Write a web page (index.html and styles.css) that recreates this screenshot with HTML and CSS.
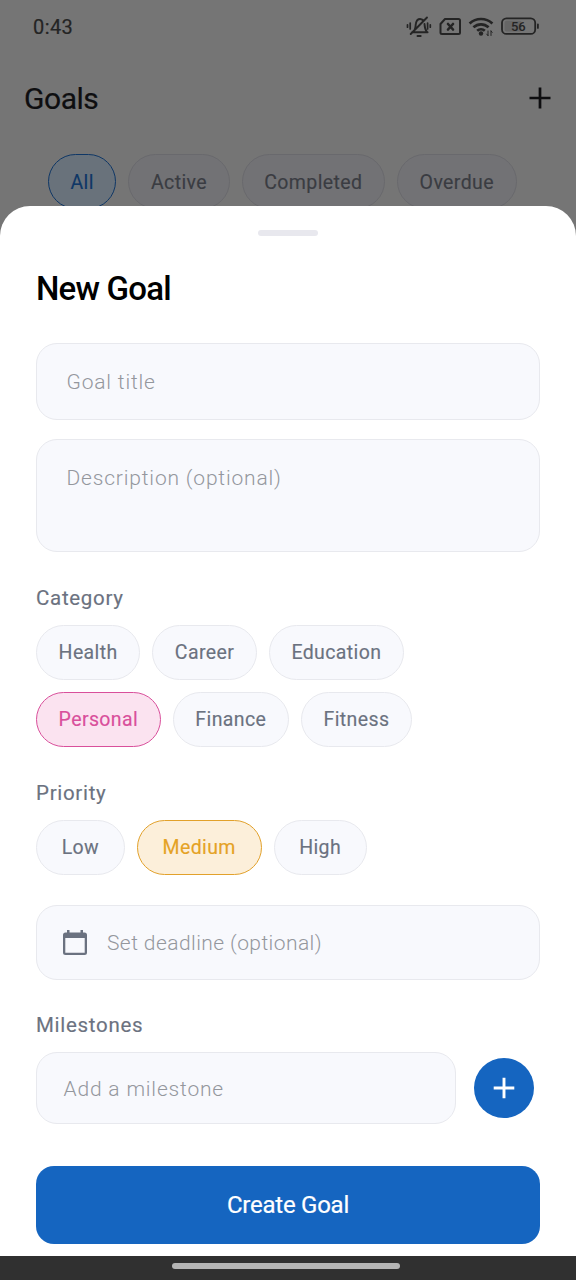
FILE: index.html
```html
<!DOCTYPE html>
<html lang="en">
<head>
<meta charset="utf-8">
<title>New Goal</title>
<link rel="stylesheet" href="styles.css">
</head>
<body>
<div class="screen">
  <div class="backdrop">
    <div class="status">
      <span class="clock">0:43</span>
      <svg class="status-icons" width="134" height="24" viewBox="0 0 134 24" fill="none" stroke="#242424" stroke-width="1.9" stroke-linecap="round" stroke-linejoin="round">
        <path d="M6 18.200h15.600M8.200 16.500c1.600-2 1.200-4.800 1.700-7C10.500 6.200 12 5 14.100 5c1.600 0 2.800.7 3.500 2M18.500 10c.2 3 .3 5.300 2.200 7.500M21 3.500 4.700 20M11.500 22h3.200"/>
        <path d="M4.200 9v6M1.500 10.800v2.400M21.600 9v6M24.300 10.800v2.400" stroke-width="1.700"/>
        <path d="M39 5h13.500q1.500 0 1.500 1.500v12q0 1.500-1.500 1.500H36q-1.500 0-1.500-1.500V10z" stroke-width="2"/>
        <path d="m42 10 5 5.500m0-5.500-5 5.500" stroke-width="2.600"/>
        <path d="M63.600 9.500c6.500-6 16.300-6 22.800 0M67.400 13.300c4.500-4 10.700-4 15.200 0M71.200 16.800c2.200-2 5.400-2 7.600 0" stroke-width="2.700" stroke-linecap="butt"/>
        <circle cx="75" cy="19.500" r="2.200" fill="#242424" stroke="none"/>
        <path d="M82 17v4.500m-1.300-1.400 1.300 1.500M85 21.500V17m1.200 1.400L85 17" stroke-width="1"/>
        <rect x="96" y="4.300" width="33.200" height="15.600" rx="4.500" stroke-width="1.800"/>
        <rect x="98.600" y="6.800" width="17" height="10.600" rx="2" fill="#666" stroke="none"/>
        <path d="M131.900 10.500v3.400" stroke-width="1.800"/>
        <text class="battery-text" x="112.300" y="16.700" text-anchor="middle">56</text>
      </svg>
    </div>
    <div class="header">
      <span class="page-title">Goals</span>
      <svg width="24" height="24" viewBox="0 0 24 24" stroke="#0e0e10" stroke-width="2.700"><path d="M12 1.500v21M1.500 12h21"/></svg>
    </div>
    <div class="filters">
      <span class="chip filter filter-on">All</span>
      <span class="chip filter">Active</span>
      <span class="chip filter">Completed</span>
      <span class="chip filter">Overdue</span>
    </div>
  </div>

  <div class="sheet">
    <div class="handle"></div>
    <div class="sheet-title">New Goal</div>
    <div class="field field-title">Goal title</div>
    <div class="field field-desc">Description (optional)</div>

    <div class="label">Category</div>
    <div class="chips">
      <span class="chip">Health</span>
      <span class="chip">Career</span>
      <span class="chip">Education</span>
      <span class="chip chip-pink">Personal</span>
      <span class="chip">Finance</span>
      <span class="chip">Fitness</span>
    </div>

    <div class="label">Priority</div>
    <div class="chips">
      <span class="chip chip-wide">Low</span>
      <span class="chip chip-wide chip-amber">Medium</span>
      <span class="chip chip-wide">High</span>
    </div>

    <div class="field field-date">
      <svg width="24" height="26" viewBox="0 0 24 26" fill="#6b7280"><path fill-rule="evenodd" d="M4 0h2.500v2.500h11V0H20v2.500h1.500Q24 2.500 24 5v17.500Q24 25 21.500 25h-19Q0 25 0 22.500V5Q0 2.500 2.500 2.500H4zM2.300 8v14.700h19.400V8z"/></svg>
      <span>Set deadline (optional)</span>
    </div>

    <div class="label label-milestones">Milestones</div>
    <div class="milestone-row">
      <div class="field field-milestone">Add a milestone</div>
      <div class="add">
        <svg width="22" height="22" viewBox="0 0 22 22" stroke="#fff" stroke-width="2.900"><path d="M11 .7v20.600M.7 11h20.600"/></svg>
      </div>
    </div>
    <div class="create">Create Goal</div>
  </div>
  <div class="nav"><div class="nav-bar"></div></div>
</div>
</body>
</html>
```
FILE: styles.css
```css
* { box-sizing: border-box; }
body { margin: 0; font-family: Roboto, "Liberation Sans", sans-serif; }
.screen { position: relative; width: 576px; height: 1280px; overflow: hidden; background: #757575; }
.status { display: flex; justify-content: space-between; align-items: center; height: 52px; padding: 0 36px 0 33px; }
.clock { padding-top: 1px; font-size: 20px; letter-spacing: 0.4px; color: #242424; -webkit-text-stroke: 0.2px #242424; }
.battery-text { font-size: 13px; font-weight: 500; fill: #242424; stroke: none; }
.header { display: flex; justify-content: space-between; align-items: center; height: 91px; padding: 0 24px; }
.page-title { padding-top: 2px; font-size: 30px; line-height: 36px; letter-spacing: -0.45px; color: #0e0e10; -webkit-text-stroke: 0.2px #0e0e10; }
.filters { display: flex; gap: 12px; margin-top: 11px; padding-left: 47.8px; }
.chip {
  display: flex; align-items: center; justify-content: center;
  height: 55px; padding: 0 21.6px; border: 1.5px solid #e8e9ee; border-radius: 28px;
  background: #f8f9fd; color: #6b7280; font-size: 19.5px; font-weight: 400; letter-spacing: 0.39px;
  -webkit-text-stroke: 0.15px currentColor;
}
.filter { padding-top: 1px; background: #727275; border-color: #69696d; color: #3a3c42; }
.filter-on { background: #69727b; border-color: #0f3766; color: #0f3766; }
.sheet {
  position: absolute; left: 0; top: 206px; width: 576px; height: 1050px;
  padding: 24px 36px 0; border-radius: 30px 30px 0 0; background: #fff;
}
.handle { width: 60px; height: 6px; margin: 0 auto; border-radius: 3px; background: #e8e8ee; }
.sheet-title { margin: 33px 0 34px; font-size: 33px; line-height: 40px; font-weight: 500; letter-spacing: -0.8px; color: #000; }
.field {
  display: flex; align-items: center; border: 1.5px solid #e8e9ee; border-radius: 21px;
  background: #f8f9fd; color: #94979d; font-size: 21px; font-weight: 300; line-height: 25px; letter-spacing: 0.82px;
}
.field-title { height: 77px; padding: 2px 29.5px 0; }
.field-desc { height: 113px; margin-top: 19px; padding: 26px 29.5px; align-items: flex-start; }
.label {
  margin: 34px 0 15px; font-size: 20.5px; line-height: 24px; font-weight: 400; letter-spacing: 0.7px; color: #6b7280;
  -webkit-text-stroke: 0.15px currentColor;
}
.chips { display: flex; flex-wrap: wrap; gap: 12px; padding-right: 80px; }
.chip-wide { padding: 0 24.7px; }
.chip-pink { background: #fbe3f0; border-color: #d94f9b; color: #d94f9b; }
.chip-amber { background: #fcefda; border-color: #e2a12b; color: #e5a225; }
.field-date { height: 75px; margin-top: 30px; padding: 1px 26px 0; gap: 20px; letter-spacing: 0.42px; }
.label-milestones { margin-top: 33px; }
.milestone-row { display: flex; align-items: center; gap: 18px; }
.field-milestone { width: 420px; height: 72px; padding: 2px 26.5px 0; }
.add { display: flex; align-items: center; justify-content: center; width: 60px; height: 60px; border-radius: 50%; background: #1565c0; }
.create {
  display: flex; align-items: center; justify-content: center; height: 78px; margin-top: 42px;
  border-radius: 18px; background: #1565c0; color: #fff; font-size: 24px; font-weight: 400; letter-spacing: -0.25px;
  -webkit-text-stroke: 0.2px #fff;
}
.nav { position: absolute; left: 0; bottom: 0; width: 576px; height: 24px; padding: 7px 0 0 172px; background: #303030; }
.nav-bar { width: 228px; height: 6px; border-radius: 3px; background: #b5b5b5; }
```
